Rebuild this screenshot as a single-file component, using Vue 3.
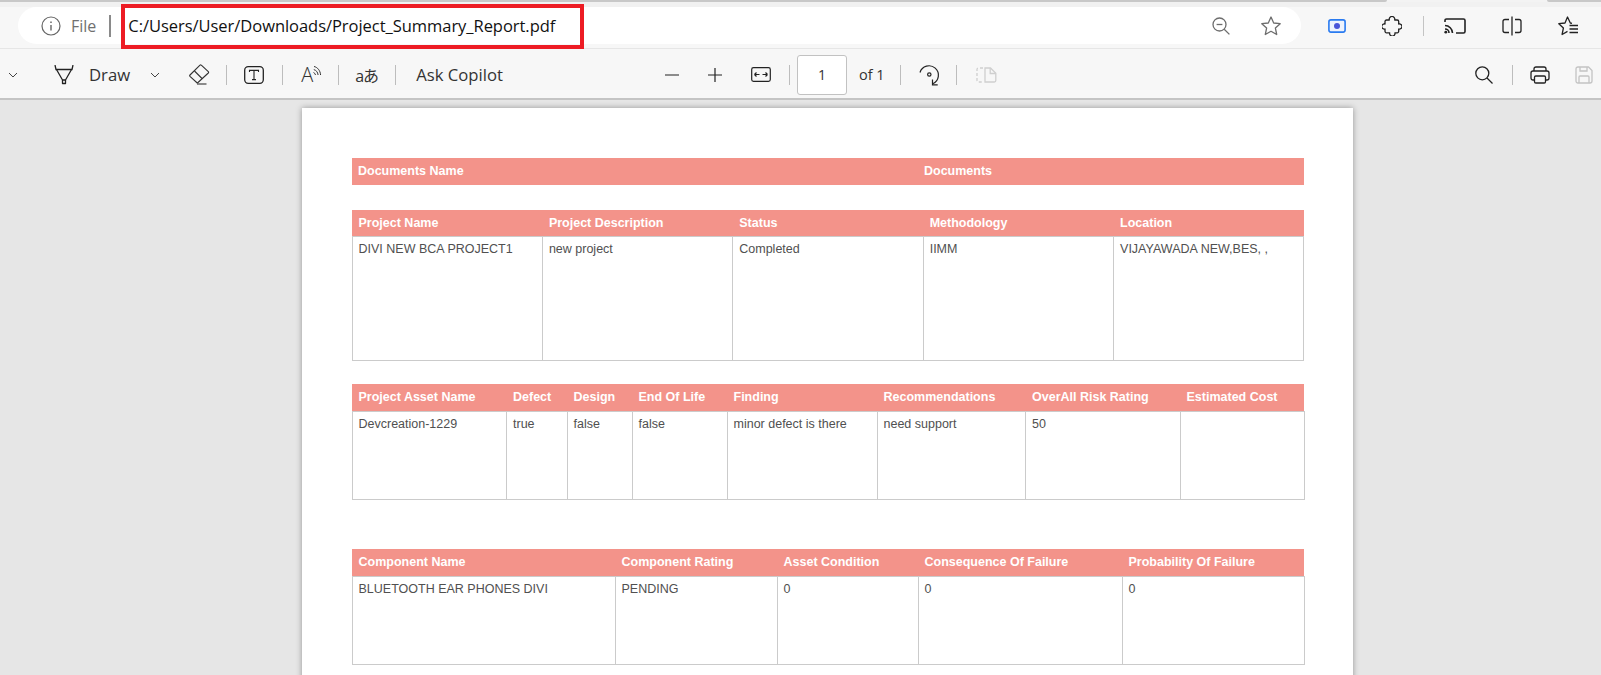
<script setup>
const tables = [
  {
    gap: "first",
    widths: [566, 386],
    head: ["Documents Name", "Documents"],
    rows: [],
  },
  {
    gap: "normal",
    widths: [190.4, 190.4, 190.4, 190.4, 190.4],
    head: ["Project Name", "Project Description", "Status", "Methodology", "Location"],
    rows: [["DIVI NEW BCA PROJECT1", "new project", "Completed", "IIMM", "VIJAYAWADA NEW,BES, ,"]],
    bodyClass: "tall",
  },
  {
    gap: "narrow",
    widths: [154.5, 60.5, 65, 95, 150, 148.5, 154.5, 124],
    head: ["Project Asset Name", "Defect", "Design", "End Of Life", "Finding", "Recommendations", "OverAll Risk Rating", "Estimated Cost"],
    rows: [["Devcreation-1229", "true", "false", "false", "minor defect is there", "need support", "50", ""]],
    bodyClass: "mid",
  },
  {
    gap: "wide",
    widths: [263, 162, 141, 204, 182],
    head: ["Component Name", "Component Rating", "Asset Condition", "Consequence Of Failure", "Probability Of Failure"],
    rows: [["BLUETOOTH EAR PHONES DIVI", "PENDING", "0", "0", "0"]],
    bodyClass: "mid",
  },
];
</script>

<template>
  <div class="app">
    <div class="tab-strip">
      <div class="tab-edge left"></div>
      <div class="tab-edge right"></div>
    </div>

    <div class="address-row">
      <div class="url-pill">
        <svg class="info" width="20" height="20" viewBox="0 0 20 20" fill="none" stroke="#666" stroke-width="1.2">
          <circle cx="10" cy="10" r="9" />
          <path d="M10 9v5.5" stroke-width="1.4" />
          <path d="M10 5.6v1.4" stroke-width="1.5" />
        </svg>
        <span class="file">File</span>
        <span class="url-sep"></span>
        <span class="url">C:/Users/User/Downloads/Project_Summary_Report.pdf</span>
        <svg class="zoom-out" width="18" height="18" viewBox="0 0 18 18" fill="none" stroke="#6d6d6d" stroke-width="1.3">
          <circle cx="7.5" cy="7.5" r="6.5" />
          <path d="M4.6 7.5h5.8" />
          <path d="M12.2 12.2l5.2 5.2" />
        </svg>
        <svg class="star" width="20" height="20" viewBox="0 0 20 20" fill="none" stroke="#6d6d6d" stroke-width="1.3" stroke-linejoin="round">
          <path d="M10 1l2.7 6 6.5.7-4.8 4.4 1.3 6.4-5.7-3.2-5.7 3.2 1.3-6.4L.8 7.700l6.5-.7z" />
        </svg>
      </div>

      <svg class="rec" width="18" height="14" viewBox="0 0 18 14">
        <rect x="0.9" y="0.9" width="16.2" height="12.2" rx="2" fill="#eef3fd" stroke="#2a7bf0" stroke-width="1.6" />
        <circle cx="9" cy="7" r="3" fill="#4a55d8" />
      </svg>
      <svg class="puzzle" width="20" height="20" viewBox="0 0 20 20" fill="none" stroke="#222" stroke-width="1.3" stroke-linejoin="round">
        <path d="M7.300 4a2.800 2.800 0 1 1 5.400 0h2.500a1.500 1.500 0 0 1 1.500 1.500V8a2.600 2.600 0 1 1 0 5v2.300a1.500 1.500 0 0 1-1.500 1.500h-2.300a2.700 2.700 0 1 1-5.200 0H4.500A1.500 1.500 0 0 1 3 15.300V13a2.600 2.600 0 1 1 0-5V5.500A1.500 1.500 0 0 1 4.500 4z" />
      </svg>
      <span class="addr-sep"></span>
      <svg class="cast" width="22" height="16" viewBox="0 0 22 16" fill="none" stroke="#222" stroke-width="1.6">
        <path d="M1 4V2.500C1 1.600 1.600 1 2.500 1h17c.9 0 1.500.6 1.500 1.500v11c0 .9-.6 1.500-1.500 1.500H12" />
        <path d="M1 7.500c4 0 7.500 3.500 7.500 7.500" />
        <path d="M1 11c2.200 0 4 1.800 4 4" />
        <circle cx="1.800" cy="14.200" r="1.400" fill="#222" stroke="none" />
      </svg>
      <svg class="split" width="20" height="20" viewBox="0 0 20 20" fill="none" stroke="#222" stroke-width="1.3">
        <path d="M7 3.500H3c-1.200 0-2 .8-2 2v9c0 1.200.8 2 2 2h4" />
        <path d="M13 3.500h4c1.200 0 2 .8 2 2v9c0 1.200-.8 2-2 2h-4" />
        <path d="M10 .5v19" />
      </svg>
      <svg class="fav" width="20" height="20" viewBox="0 0 20 20" fill="none" stroke="#222" stroke-width="1.300" stroke-linejoin="round">
        <path d="M14 7.300L12.300 7 9.500 1 7 7l-6.200.7L5.400 12l-1.300 6.500 5.400-3.100" />
        <path d="M11.500 9.500H20M11.500 13H20M11.500 16.500H20" />
      </svg>
    </div>

    <div class="pdf-toolbar">
      <svg class="chev first" width="10" height="6" viewBox="0 0 10 6" fill="none" stroke="#444" stroke-width="1">
        <path d="M1 1l4 4 4-4" />
      </svg>
      <svg class="draw" width="20" height="20" viewBox="0 0 20 20" fill="none" stroke="#222" stroke-width="1.300" stroke-linejoin="round">
        <path d="M1 0l1 4.500h16L19 0" />
        <path d="M2.500 4.500L8.500 15h3l6-10.500" />
        <path d="M8.500 15v3.500h3V15" />
      </svg>
      <span class="tool-text draw-text">Draw</span>
      <svg class="chev second" width="10" height="6" viewBox="0 0 10 6" fill="none" stroke="#444" stroke-width="1">
        <path d="M1 1l4 4 4-4" />
      </svg>
      <svg class="eraser" width="22" height="21" viewBox="0 0 22 21" fill="none" stroke="#333" stroke-width="1.100" stroke-linejoin="round">
        <path d="M12 1.200c.4-.4.9-.4 1.300 0l7 6.500c.4.400.4.900 0 1.300L10 18.500c-.4.400-.9.400-1.300 0L2 12.300c-.4-.4-.4-.9 0-1.300z" />
        <path d="M6.500 7l7.500 7.500" />
        <path d="M9 20h9.500" />
      </svg>
      <span class="tool-sep sep-a"></span>
      <svg class="text-box" width="20" height="18" viewBox="0 0 20 18" fill="none" stroke="#222" stroke-width="1.300">
        <rect x="0.700" y="0.700" width="18.600" height="16.600" rx="3.500" />
        <path d="M5.500 6V4.400h9V6M10 4.400v9.200M8 13.600h4" stroke-width="1.100" />
      </svg>
      <span class="tool-sep sep-b"></span>
      <span class="read-aloud">
        <span class="read-a">A</span>
        <svg width="9" height="11" viewBox="0 0 9 11" fill="none" stroke="#333" stroke-width="1">
          <path d="M.5 6.500c1 .4 1.800 1.300 2 2.500M.8 3.600c2.400.6 4 2.600 4.300 5.400M1 .5c3.400.7 6.200 3.800 6.600 8.500" />
        </svg>
      </span>
      <span class="tool-sep sep-c"></span>
      <span class="translate">aあ</span>
      <span class="tool-sep sep-d"></span>
      <span class="tool-text copilot">Ask Copilot</span>

      <svg class="minus" width="14" height="2" viewBox="0 0 14 2"><path d="M0 1h14" stroke="#444" stroke-width="1.200" /></svg>
      <svg class="plus" width="14" height="14" viewBox="0 0 14 14" fill="none" stroke="#222" stroke-width="1.200">
        <path d="M0 7h14M7 0v14" />
      </svg>
      <svg class="fit" width="20" height="15" viewBox="0 0 20 15" fill="none" stroke="#222" stroke-width="1.200">
        <rect x="0.700" y="0.700" width="18.600" height="13.600" rx="1.800" />
        <path d="M3.500 7.500h5M3.500 7.500l2-2M3.500 7.500l2 2M11.500 7.500h5M16.500 7.500l-2-2M16.500 7.500l-2 2" />
      </svg>
      <span class="tool-sep sep-e"></span>
      <span class="page-input">1</span>
      <span class="page-of">of 1</span>
      <span class="tool-sep sep-f"></span>
      <svg class="rotate" width="21" height="22" viewBox="0 0 21 22" fill="none" stroke="#222" stroke-width="1.200">
        <path d="M1 8.500A9.400 9.400 0 1 1 13.800 19.800" />
        <circle cx="10.300" cy="10.500" r="1.700" />
        <path d="M13.500 15.500v5.300h5.200" />
      </svg>
      <span class="tool-sep sep-g"></span>
      <svg class="two-page" width="21" height="16" viewBox="0 0 21 16" fill="none" stroke="#cfcfcf" stroke-width="1.300">
        <path d="M7 1H2.500C1.500 1 1 1.500 1 2.500v11c0 1 .5 1.500 1.500 1.500H7" stroke-dasharray="3 2" />
        <path d="M9 1h5.500l5.300 5.300v7.200c0 1-.5 1.500-1.500 1.500H9z" />
        <path d="M14.200 1v5.500h5.500" />
      </svg>

      <svg class="search" width="18" height="18" viewBox="0 0 18 18" fill="none" stroke="#222" stroke-width="1.300">
        <circle cx="7.300" cy="7.300" r="6.500" />
        <path d="M12 12l5.500 5.500" />
      </svg>
      <span class="tool-sep sep-h"></span>
      <svg class="print" width="20" height="18" viewBox="0 0 20 18" fill="none" stroke="#222" stroke-width="1.300">
        <path d="M4 5V3c0-1.200.8-2 2-2h8c1.200 0 2 .8 2 2v2" />
        <path d="M4 14H3c-1.200 0-2-.8-2-2V7c0-1.200.8-2 2-2h14c1.200 0 2 .8 2 2v5c0 1.200-.8 2-2 2h-1" />
        <rect x="4.500" y="10" width="11" height="7" rx="1.300" />
      </svg>
      <svg class="save" width="18" height="18" viewBox="0 0 18 18" fill="none" stroke="#c4c4c4" stroke-width="1.300">
        <path d="M1 3c0-1.200.8-2 2-2h10.500L17 4.500V15c0 1.200-.8 2-2 2H3c-1.200 0-2-.8-2-2z" />
        <path d="M5 1v4h7V1M4 17v-6c0-.6.4-1 1-1h8c.6 0 1 .4 1 1v6" />
      </svg>
    </div>

    <div class="viewer">
      <div class="page">
        <table v-for="(t, i) in tables" :key="i" class="report" :class="t.gap">
          <colgroup>
            <col v-for="(w, j) in t.widths" :key="j" :style="{ width: w + 'px' }" />
          </colgroup>
          <thead>
            <tr>
              <th v-for="h in t.head" :key="h">{{ h }}</th>
            </tr>
          </thead>
          <tbody v-if="t.rows.length">
            <tr v-for="(row, r) in t.rows" :key="r" :class="t.bodyClass">
              <td v-for="(cell, c) in row" :key="c">{{ cell }}</td>
            </tr>
          </tbody>
        </table>
      </div>
    </div>

    <!-- red annotation box drawn over the screenshot -->
    <div class="highlight"></div>
  </div>
</template>

<style>
html,
body {
  margin: 0;
  height: 675px;
  overflow: hidden;
}
</style>

<style scoped>
.app {
  position: relative;
  width: 1601px;
  height: 675px;
  overflow: hidden;
  background: #e6e6e6;
  font-family: "Open Sans", "Noto Sans CJK JP", sans-serif;
  display: flex;
  flex-direction: column;
}

.tab-strip {
  height: 2px;
  background: #f3f3f3;
  display: flex;
  justify-content: space-between;
  flex: none;
}

.tab-edge {
  height: 2px;
  background: #c8c8c8;
}

.tab-edge.left {
  width: 1387px;
  border-bottom-right-radius: 3px;
}

.tab-edge.right {
  width: 54px;
  border-bottom-left-radius: 3px;
}

.address-row {
  height: 47px;
  flex: none;
  box-sizing: border-box;
  background: #f7f7f7;
  background-image: linear-gradient(#f1f1f1 5px, #f7f7f7 5px);
  border-bottom: 1px solid #e6e6e6;
  padding: 5px 0 4px 18px;
  display: flex;
  align-items: center;
}

.url-pill {
  width: 1283px;
  height: 37px;
  box-sizing: border-box;
  background: #fff;
  border-radius: 19px;
  display: flex;
  align-items: center;
  padding-left: 23px;
}

.file {
  margin-left: 10px;
  font-size: 16px;
  color: #707070;
}

.url-sep {
  width: 2px;
  height: 22px;
  background: #8a8a8a;
  margin-left: 13px;
}

.url {
  margin-left: 17px;
  font-size: 16.500px;
  color: #111;
  white-space: nowrap;
  letter-spacing: -0.04px;
}

.zoom-out {
  margin-left: auto;
}

.star {
  margin-left: 31px;
  margin-right: 20px;
}

.rec {
  margin-left: 27px;
}

.puzzle {
  margin-left: 36px;
}

.addr-sep {
  width: 1px;
  height: 20px;
  background: #c4c4c4;
  margin-left: 21px;
}

.cast {
  margin-left: 20px;
}

.split {
  margin-left: 36px;
}

.fav {
  margin-left: 36px;
}

.pdf-toolbar {
  height: 51px;
  flex: none;
  box-sizing: border-box;
  background: #f7f7f7;
  border-bottom: 2px solid #c4c4c4;
  display: flex;
  align-items: center;
  padding: 2px 8px 0;
  color: #333;
}

.pdf-toolbar svg {
  flex: none;
}

.tool-text {
  font-size: 16.700px;
  color: #333;
  white-space: nowrap;
}

.tool-sep {
  width: 1px;
  height: 20px;
  background: #bdbdbd;
  flex: none;
}

.draw {
  margin-left: 36px;
}

.draw-text {
  margin-left: 15px;
}

.chev.second {
  margin-left: 20px;
}

.eraser {
  margin-left: 28px;
}

.sep-a {
  margin-left: 16px;
}

.text-box {
  margin-left: 17px;
}

.sep-b {
  margin-left: 18px;
}

.read-aloud {
  margin-left: 18px;
  width: 22px;
  display: flex;
  align-items: flex-start;
  font-size: 20px;
  line-height: 20px;
  font-weight: 300;
}

.read-aloud svg {
  margin-top: 1px;
}

.sep-c {
  margin-left: 15px;
}

.translate {
  margin-left: 16px;
  width: 23px;
  font-size: 16px;
  white-space: nowrap;
  letter-spacing: -1px;
}

.sep-d {
  margin-left: 17px;
}

.copilot {
  margin-left: 20px;
}

.minus {
  margin-left: 162px;
}

.plus {
  margin-left: 29px;
}

.fit {
  margin-left: 29px;
}

.sep-e {
  margin-left: 18px;
}

.page-input {
  margin-left: 7px;
  width: 50px;
  height: 40px;
  box-sizing: border-box;
  background: #fff;
  border: 1px solid #c2c2c2;
  border-radius: 3px;
  font-size: 14px;
  line-height: 38px;
  text-align: center;
  flex: none;
}

.page-of {
  margin-left: 12px;
  font-size: 14.500px;
  white-space: nowrap;
}

.sep-f {
  margin-left: 15px;
}

.rotate {
  margin-left: 18px;
}

.sep-g {
  margin-left: 16px;
}

.two-page {
  margin-left: 19px;
}

.search {
  margin-left: auto;
}

.sep-h {
  margin-left: 19px;
}

.print {
  margin-left: 17px;
}

.save {
  margin-left: 25px;
}

.viewer {
  flex: 1;
  min-height: 0;
  overflow: hidden;
  padding-top: 8px;
  padding-left: 302px;
}

.page {
  width: 1051px;
  box-sizing: border-box;
  height: 640px;
  background: #fff;
  box-shadow: 0 0 6px rgba(0, 0, 0, 0.35);
  padding: 50px 0 0 49.500px;
}

.report {
  width: 952px;
  table-layout: fixed;
  border-collapse: collapse;
  font-family: "Liberation Sans", Arial, sans-serif;
  font-size: 12.500px;
}

.report.normal {
  margin-top: 25px;
}

.report.narrow {
  margin-top: 23px;
}

.report.wide {
  margin-top: 49px;
}

.report th {
  height: 25px;
  padding: 0 6.500px 1px;
  background: #f3938a;
  color: #fff;
  font-weight: 700;
  text-align: left;
  white-space: nowrap;
}

.report.first th,
.report.narrow th,
.report.wide th {
  padding-bottom: 2px;
}

.report td {
  padding: 5px 6px 0;
  border: 1px solid #cbcbcb;
  color: #505050;
  vertical-align: top;
  white-space: nowrap;
}

.tall td {
  height: 118px;
}

.mid td {
  height: 82px;
}

.highlight {
  position: absolute;
  left: 121px;
  top: 4px;
  width: 463px;
  height: 45px;
  box-sizing: border-box;
  border: 4px solid #ed1c24;
}
</style>
